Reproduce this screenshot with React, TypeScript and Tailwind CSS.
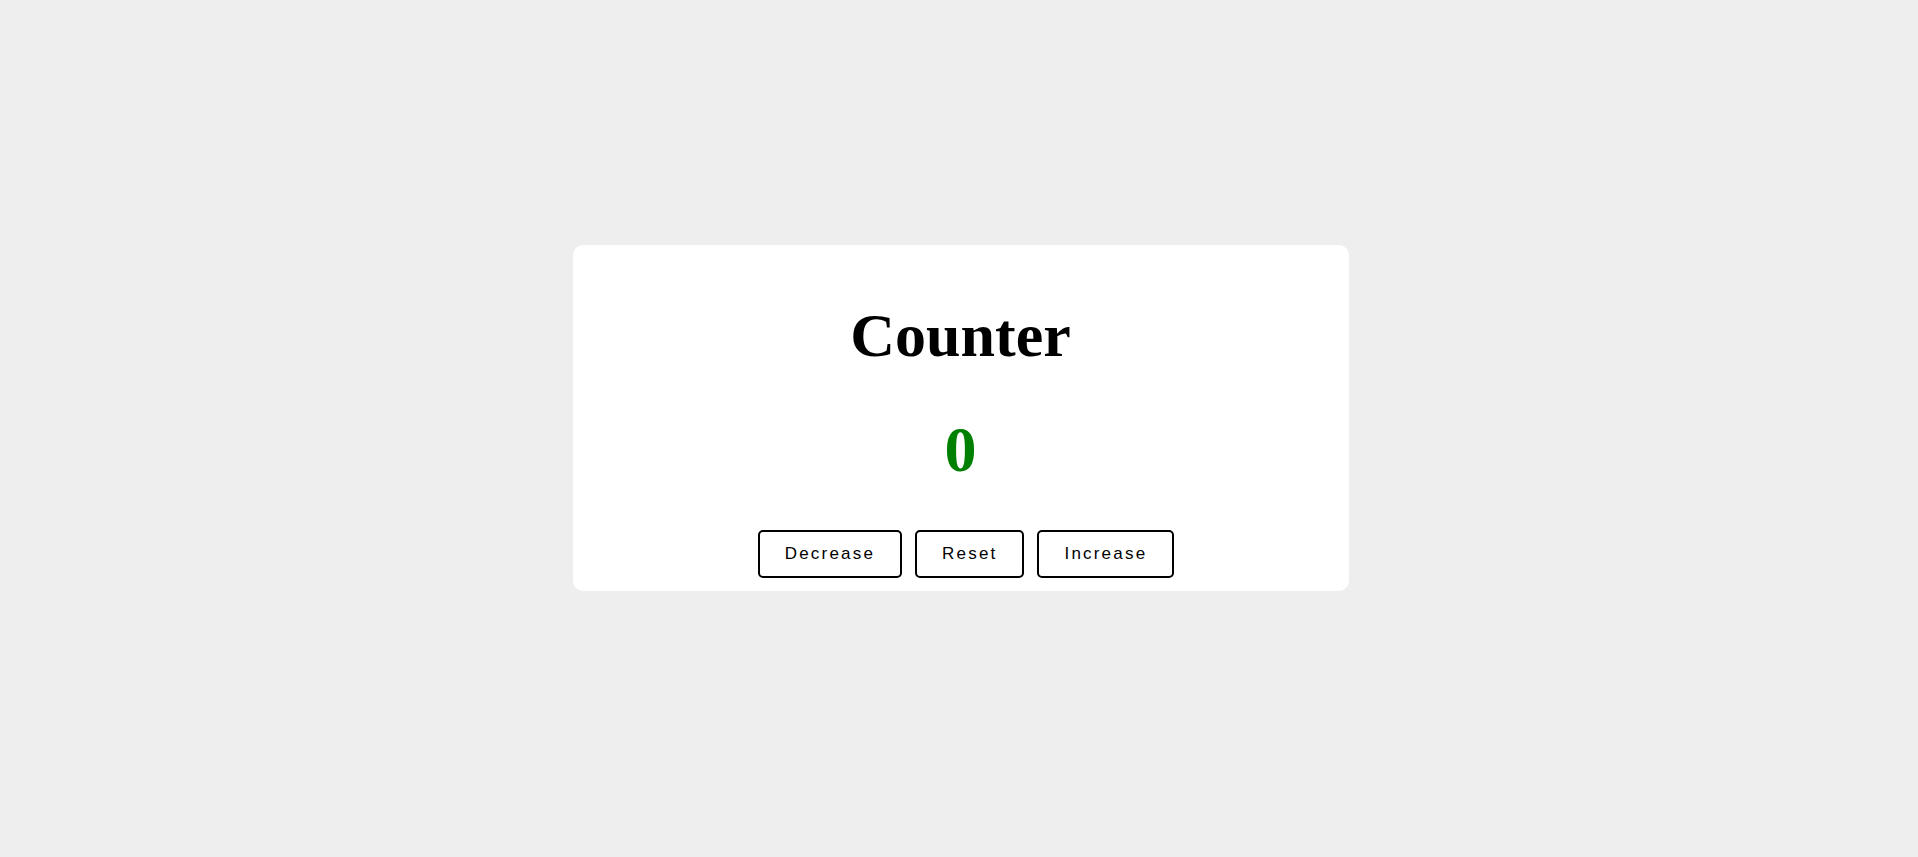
import React, { useState } from "react";

export default function App() {
  const [count, setCount] = useState(0);
  const color = count > 0 ? "text-[#008000]" : count < 0 ? "text-[#ff0000]" : "text-[#008000]";
  const btn =
    "bg-white border-2 border-black rounded-[5px] px-[25px] py-[12px] text-[17px] leading-[19.5px] tracking-[2.2px] text-black cursor-pointer [font-family:'Liberation_Sans',Arial,sans-serif]";
  return (
    <div className="min-h-screen w-full bg-[#eeeeee] flex justify-center pt-[245px] pl-[3px]">
      <div className="w-[776px] h-[346px] bg-white rounded-[10px] flex flex-col items-center pt-[53px] [font-family:'Liberation_Serif','Times_New_Roman',serif]">
        <h1 className="text-[62px] leading-[74px] font-bold text-black">Counter</h1>
        <div className={`mt-[41px] text-[64px] leading-[74px] font-bold ${color}`}>{count}</div>
        <div className="mt-[43px] flex gap-[13px] pl-[11px]">
          <button className={btn} onClick={() => setCount(count - 1)}>
            Decrease
          </button>
          <button className={btn} onClick={() => setCount(0)}>
            Reset
          </button>
          <button className={btn} onClick={() => setCount(count + 1)}>
            Increase
          </button>
        </div>
      </div>
    </div>
  );
}
